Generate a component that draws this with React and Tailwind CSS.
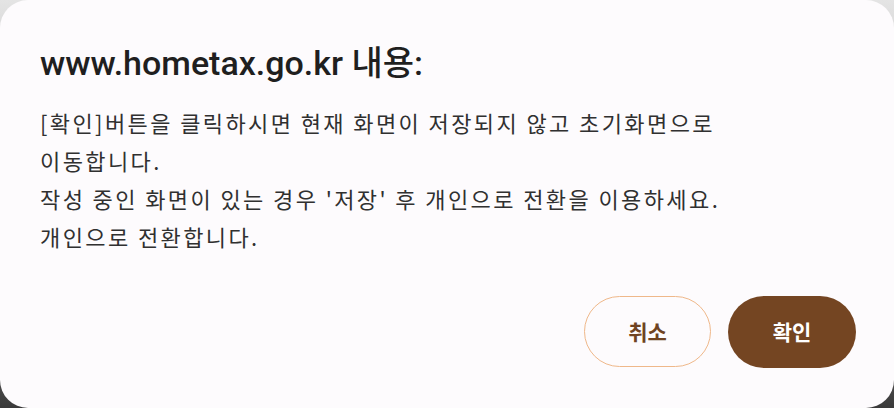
import React from "react";

export default function App() {
  return (
    <div className="w-[894px] h-[408px] bg-[linear-gradient(180deg,#e4e4e4_0%,#9a9a9a_60%,#3a3a3a_100%)] overflow-hidden">
      <div className="w-full h-full rounded-[28px] bg-[#fdfbfd] flex flex-col pl-[40px] pr-[38px] pt-[42px] pb-[40px]">
        <h1 className="text-[34px] leading-[42px] font-medium text-[#1f1f1f] font-['Roboto','Noto_Sans_CJK_KR',sans-serif] tracking-[0px]">
          www.hometax.go.kr 내용:
        </h1>
        <div className="mt-[19px] text-[22px] leading-[38px] tracking-[2.4px] text-[#303030] font-['Noto_Sans_CJK_KR',sans-serif]">
          <p>[확인]버튼을 클릭하시면 현재 화면이 저장되지 않고 초기화면으로</p>
          <p>이동합니다.</p>
          <p>작성 중인 화면이 있는 경우 '저장' 후 개인으로 전환을 이용하세요.</p>
          <p>개인으로 전환합니다.</p>
        </div>
        <div className="mt-auto flex justify-end gap-[17px]">
          <button className="w-[127px] h-[71px] rounded-full border-[1.5px] border-[#efb88a] bg-transparent text-[21px] font-bold text-[#6f4322] font-['Noto_Sans_CJK_KR',sans-serif]">
            취소
          </button>
          <button className="w-[128px] h-[72px] rounded-full bg-[#744522] text-[21px] font-bold text-white font-['Noto_Sans_CJK_KR',sans-serif]">
            확인
          </button>
        </div>
      </div>
    </div>
  );
}
